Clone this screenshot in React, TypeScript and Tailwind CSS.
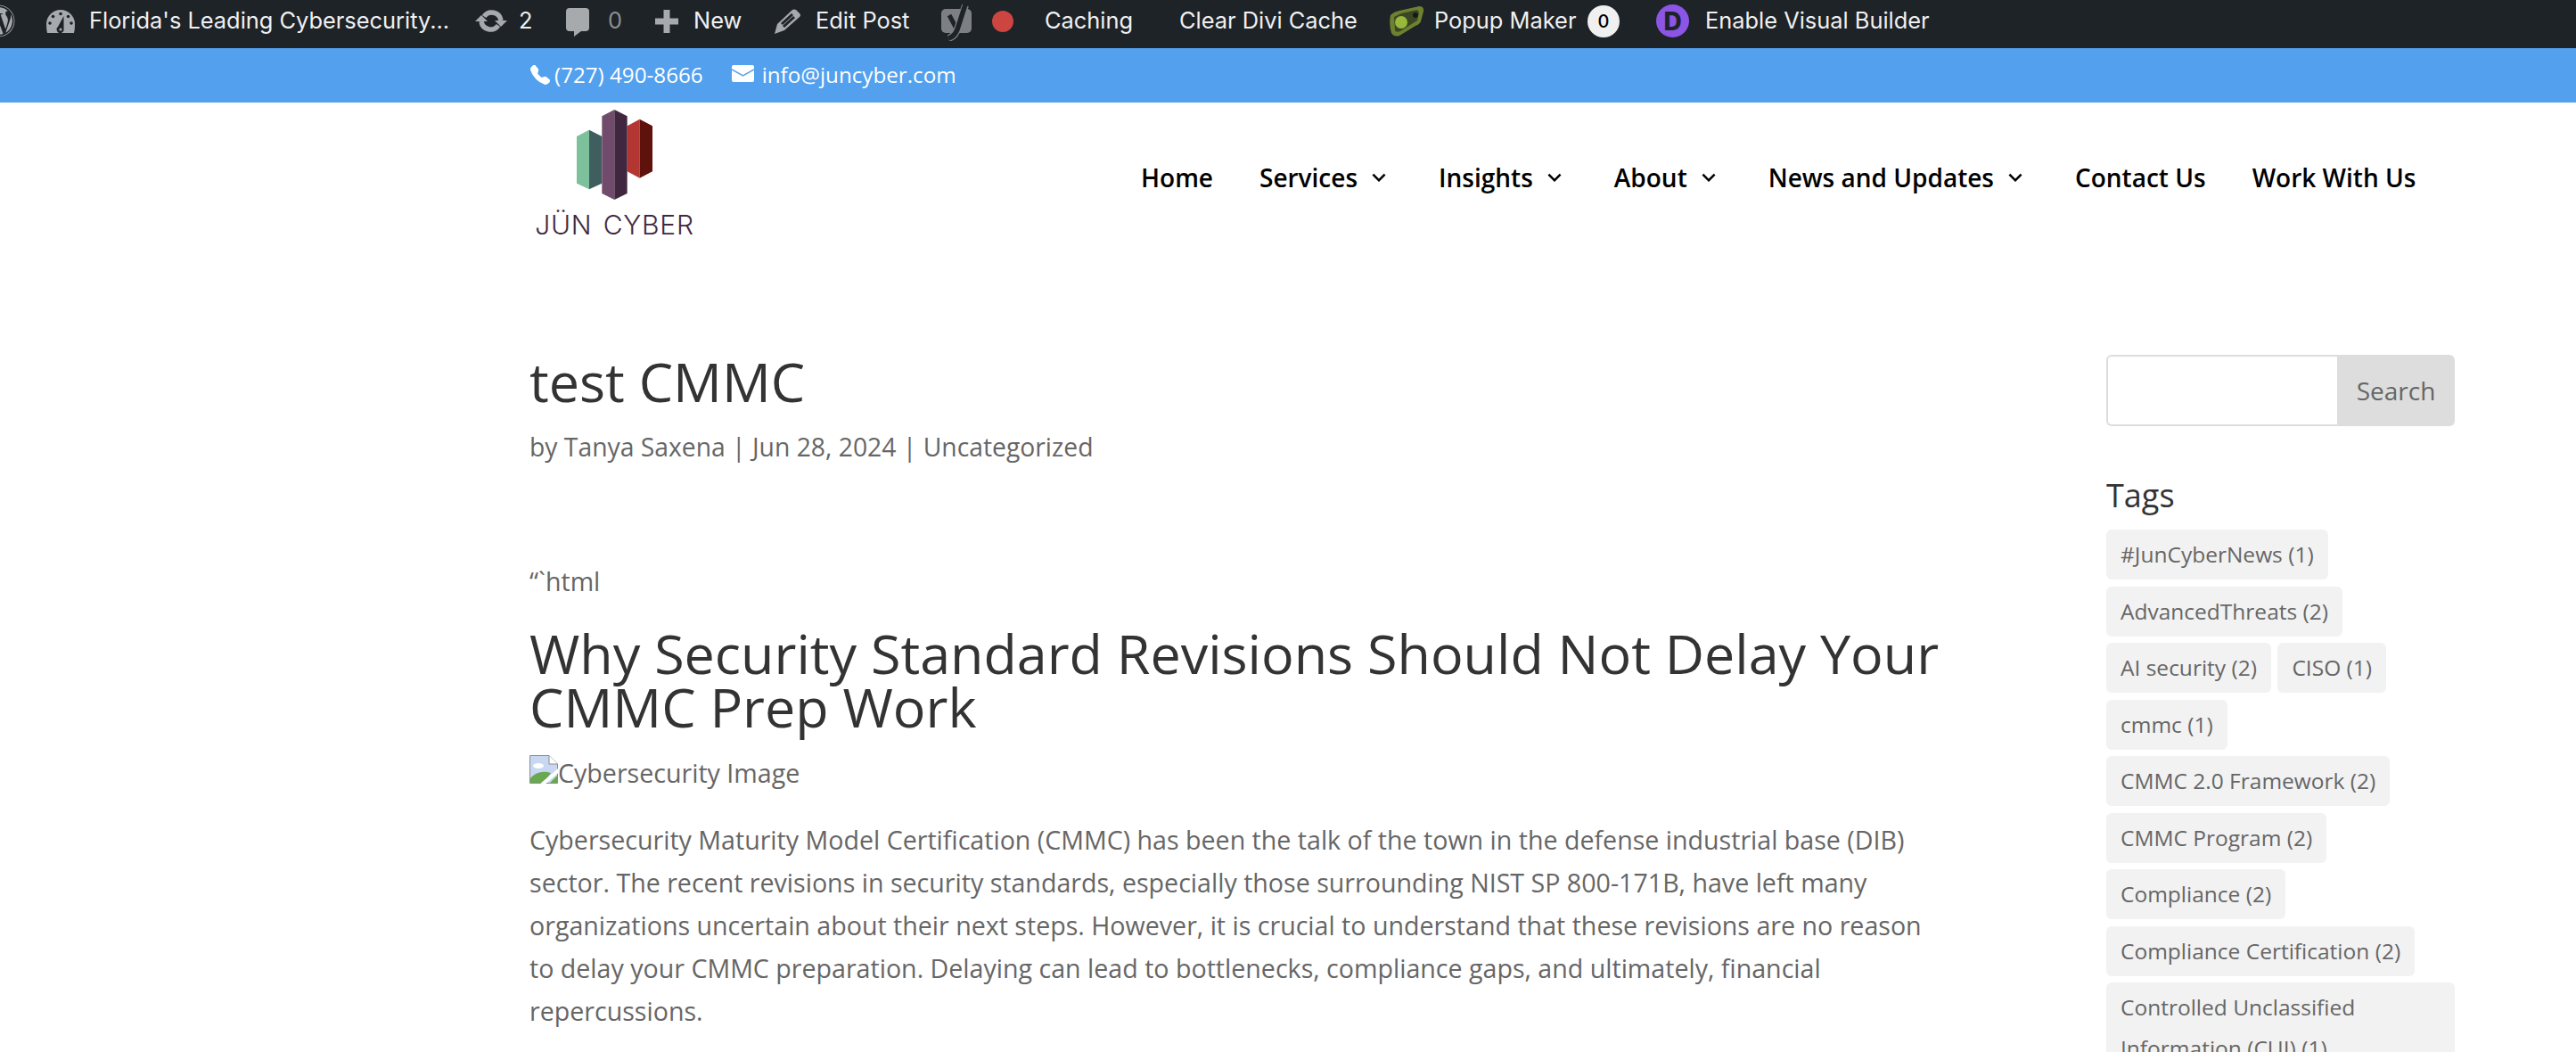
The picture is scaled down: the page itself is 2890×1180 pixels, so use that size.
import React from "react";
import { FaWordpress } from "react-icons/fa";
import { BsTelephoneFill } from "react-icons/bs";
import { MdKeyboardArrowDown } from "react-icons/md";

const NAV = [
  { label: "Home" },
  { label: "Services", caret: true },
  { label: "Insights", caret: true },
  { label: "About", caret: true },
  { label: "News and Updates", caret: true },
  { label: "Contact Us" },
  { label: "Work With Us" },
];

const TAGS = [
  "#JunCyberNews (1)",
  "AdvancedThreats (2)",
  "AI security (2)",
  "CISO (1)",
  "cmmc (1)",
  "CMMC 2.0 Framework (2)",
  "CMMC Program (2)",
  "Compliance (2)",
  "Compliance Certification (2)",
  "Controlled Unclassified Information (CUI) (1)",
];

function Gauge() {
  return (
    <svg viewBox="0 0 32 26" className="w-[32px] h-[26px] ml-[35px] shrink-0">
      <path d="M1 26 Q0 22 0 16 A16 16 0 0 1 32 16 Q32 22 31 26 Z" fill="#a7aaad" />
      <circle cx="16" cy="4.5" r="1.8" fill="#1d2327" />
      <circle cx="7.5" cy="7.5" r="1.8" fill="#1d2327" />
      <circle cx="24.5" cy="7.5" r="1.8" fill="#1d2327" />
      <circle cx="4" cy="15" r="1.8" fill="#1d2327" />
      <circle cx="28" cy="15" r="1.8" fill="#1d2327" />
      <path d="M19.5 7 L13 19 A4 4 0 1 0 19.5 21 Z" fill="#1d2327" />
      <circle cx="16" cy="22" r="1.6" fill="#a7aaad" />
    </svg>
  );
}

function SyncIcon() {
  return (
    <svg viewBox="0 0 36 27" className="w-[36px] h-[27px] ml-[32px] shrink-0">
      <g fill="none" stroke="#a7aaad" strokeWidth="5.5">
        <path d="M10 8.5 A10.5 10.5 0 0 1 29 13" />
        <path d="M26 18.5 A10.5 10.5 0 0 1 7 14" />
      </g>
      <polygon points="0,14 14,14 7,7" fill="#a7aaad" />
      <polygon points="22,13 36,13 29,20" fill="#a7aaad" />
    </svg>
  );
}

function CommentIcon() {
  return (
    <svg viewBox="0 0 26 32" className="w-[26px] h-[32px] ml-[33px] mt-[2px] shrink-0">
      <path d="M4 0 H22 Q26 0 26 4 V22 Q26 26 22 26 H17 L9 32 V26 H4 Q0 26 0 22 V4 Q0 0 4 0 Z" fill="#a7aaad" />
    </svg>
  );
}

function PlusIcon() {
  return (
    <svg viewBox="0 0 26 26" className="w-[26px] h-[26px] ml-[36px] shrink-0">
      <path d="M9.5 0 H16.5 V9.5 H26 V16.5 H16.5 V26 H9.5 V16.5 H0 V9.5 H9.5 Z" fill="#a7aaad" />
    </svg>
  );
}

function PencilIcon() {
  return (
    <svg viewBox="0 0 30 28" className="w-[30px] h-[28px] ml-[35px] shrink-0">
      <path
        fillRule="evenodd"
        d="M0 28 L3 17 L20 1 Q22 0 24 1 L28 5 Q30 7 28 9 L11 24 Z M7 16 L9 18 L21 7 L19 5 Z M11 21 L23 10 L21 8 L9 19 Z"
        fill="#a7aaad"
      />
    </svg>
  );
}

function Yoast() {
  return (
    <svg viewBox="0 0 36 42" className="w-[36px] h-[42px] ml-[31px] mt-[2px] shrink-0">
      <rect x="0" y="6" width="34" height="27" rx="5" fill="#7c8085" />
      <path d="M9 13 L17 28" stroke="#1d2327" strokeWidth="5" />
      <path d="M27 2 L18 29 Q15 37 8 39" stroke="#7c8085" strokeWidth="8" fill="none" />
      <path d="M27 1 L18 29 Q15 37 8 39" stroke="#1d2327" strokeWidth="5.5" fill="none" />
    </svg>
  );
}

function PopupIcon() {
  return (
    <svg viewBox="0 0 40 34" className="w-[40px] h-[34px] ml-[34px] shrink-0">
      <path d="M2 10 Q6 6 12 5 L34 0 Q40 0 39 6 L36 17 Q35 20 30 22 L12 33 Q6 35 3 30 Q0 20 2 10 Z" fill="#6c8230" />
      <path d="M6 12 L14 8 L32 4 L34 7 L32 16 L13 28 Q8 30 7 27 Z" fill="#3b4722" />
      <circle cx="14" cy="18" r="7" fill="#98b83c" />
      <circle cx="30" cy="10" r="3" fill="#16191a" />
    </svg>
  );
}

function AdminBar() {
  return (
    <div className="h-[54px] bg-[#1d2327] flex items-center text-[#f0f0f1] text-[25.4px] whitespace-nowrap overflow-hidden font-['Inter',sans-serif] pb-[7px]">
      <FaWordpress className="w-[37px] h-[37px] -ml-[20px] text-[#a7aaad] shrink-0" />
      <Gauge />
      <span className="ml-[16px] w-[401px]">Florida's Leading Cybersecurity...</span>
      <SyncIcon />
      <span className="ml-[13px] w-[20px]">2</span>
      <CommentIcon />
      <span className="ml-[21px] w-[17px] text-[#8c8f94]">0</span>
      <PlusIcon />
      <span className="ml-[17px] w-[56px]">New</span>
      <PencilIcon />
      <span className="ml-[16px] w-[110px]">Edit Post</span>
      <Yoast />
      <span className="ml-[21px] w-[24px] h-[24px] rounded-full bg-[#cc4540] shrink-0" />
      <span className="ml-[35px] w-[100px]">Caching</span>
      <span className="ml-[51px] w-[201px]">Clear Divi Cache</span>
      <PopupIcon />
      <span className="ml-[11px] w-[160px]">Popup Maker</span>
      <span className="ml-[12px] w-[36px] h-[36px] rounded-full bg-[#f0f0f1] text-black text-[20px] font-medium flex items-center justify-center shrink-0">
        0
      </span>
      <span className="ml-[41px] w-[37px] h-[37px] rounded-full bg-[#8c55e6] flex items-center justify-center shrink-0 text-[#1d2327] text-[28px] font-extrabold leading-none">
        D
      </span>
      <span className="ml-[18px]">Enable Visual Builder</span>
    </div>
  );
}

function ContactBar() {
  return (
    <div className="h-[61px] bg-[#52a0ee] pl-[595px] flex items-center text-white text-[24.2px] font-medium">
      <span className="flex items-center gap-[5px]">
        <BsTelephoneFill className="w-[22px] h-[22px]" />
        (727) 490-8666
      </span>
      <span className="ml-[32px] flex items-center gap-[9px]">
        <svg viewBox="0 0 25 19" className="w-[25px] h-[19px] mt-[-4px]">
          <rect width="25" height="19" rx="2" fill="#fff" />
          <path d="M0 5 L12.5 12 L25 5" stroke="#52a0ee" strokeWidth="1.5" fill="none" />
        </svg>
        info@juncyber.com
      </span>
    </div>
  );
}

function Logo() {
  return (
    <div className="w-[175px] flex flex-col items-center pt-[8px]">
      <svg viewBox="263 40 255 303" className="w-[85px] h-[101px]">
        <polygon points="263,130 305,108 305,308 263,288" fill="#7cc09c" />
        <polygon points="305,108 348,130 348,288 305,308" fill="#3f5f5f" />
        <polygon points="433,95 475,72 475,270 433,248" fill="#b33632" />
        <polygon points="475,72 518,95 518,248 475,270" fill="#5f110b" />
        <polygon points="348,62 390,40 390,343 348,322" fill="#714b6c" />
        <polygon points="390,40 433,62 433,322 390,343" fill="#40273f" />
      </svg>
      <span className="mt-[11px] text-[30px] leading-[34px] font-light tracking-[0.8px] [word-spacing:3px] whitespace-pre text-[#43283f] font-['Inter',sans-serif]">
        JÜN CYBER
      </span>
    </div>
  );
}

function Header() {
  return (
    <div className="h-[190px] pl-[595px] flex items-start">
      <div className="ml-[7px]">
        <Logo />
      </div>
      <nav className="ml-[503px] mt-[65px] flex items-center text-[28px] leading-[38px] font-semibold text-black whitespace-nowrap">
        {NAV.map((n, i) => (
          <span key={n.label} className={`flex items-center ${i > 0 ? "ml-[52px]" : ""}`}>
            {n.label}
            {n.caret && <MdKeyboardArrowDown className="ml-[9px] w-[30px] h-[30px]" />}
          </span>
        ))}
      </nav>
    </div>
  );
}

function BrokenImage() {
  return (
    <svg viewBox="0 0 32 32" className="inline-block align-top w-[32px] h-[32px] mt-[-1px]">
      <path d="M0.5 0.5 H22 L31.5 10 V31.5 H0.5 Z" fill="#c8d7f2" stroke="#8c8c8c" />
      <path d="M22 0.5 V10 H31.5" fill="#fff" stroke="#8c8c8c" />
      <ellipse cx="10" cy="12" rx="6" ry="3" fill="#fff" />
      <path d="M1 31 V26 Q10 16 24 20 L16 31 Z" fill="#6aa84f" />
      <path d="M31 23 V31 H23 Z" fill="#6aa84f" />
      <path d="M14 33 L34 16" stroke="#fff" strokeWidth="4" />
    </svg>
  );
}

function Article() {
  return (
    <div className="ml-[594px] w-[1590px] shrink-0 text-[#666] text-[28.6px]">
      <h1 className="text-[61px] leading-[66px] text-[#333] font-normal">test CMMC</h1>
      <p className="mt-[21px] leading-[38px] text-[28.3px]">by Tanya Saxena | Jun 28, 2024 | Uncategorized</p>
      <p className="mt-[113px] leading-[38px]">“`html</p>
      <h2 className="mt-[32px] text-[61px] leading-[60px] text-[#333] font-normal">
        Why Security Standard Revisions Should Not Delay Your CMMC Prep Work
      </h2>
      <p className="mt-[25px] leading-[38px]">
        <BrokenImage />
        Cybersecurity Image
      </p>
      <p className="mt-[32px] leading-[48px]">
        Cybersecurity Maturity Model Certification (CMMC) has been the talk of the town in the defense
        industrial base (DIB) sector. The recent revisions in security standards, especially those surrounding
        NIST SP 800-171B, have left many organizations uncertain about their next steps. However, it is crucial
        to understand that these revisions are no reason to delay your CMMC preparation. Delaying can lead to
        bottlenecks, compliance gaps, and ultimately, financial repercussions.
      </p>
    </div>
  );
}

function Sidebar() {
  return (
    <aside className="ml-[179px] w-[391px] shrink-0 text-[#666]">
      <div className="mt-[3px] h-[80px] flex">
        <div className="flex-1 border-2 border-[#ddd] border-r-0 rounded-l-[6px] bg-white" />
        <div className="w-[132px] bg-[#ddd] rounded-r-[6px] flex items-center justify-center text-[28px]">
          Search
        </div>
      </div>
      <h4 className="mt-[56px] text-[36px] leading-[44px] text-[#333] font-normal">Tags</h4>
      <div className="mt-[16px] flex flex-wrap gap-[7.5px]">
        {TAGS.map((t) => (
          <span key={t} className="bg-[#f2f2f2] rounded-[6px] px-[16px] py-[5px] text-[24.5px] leading-[46px]">
            {t}
          </span>
        ))}
      </div>
    </aside>
  );
}

export default function App() {
  return (
    <div className="w-[2890px] h-[1180px] overflow-hidden bg-white font-['Open_Sans',sans-serif]">
      <AdminBar />
      <ContactBar />
      <Header />
      <div className="flex pt-[90px]">
        <Article />
        <Sidebar />
      </div>
    </div>
  );
}
